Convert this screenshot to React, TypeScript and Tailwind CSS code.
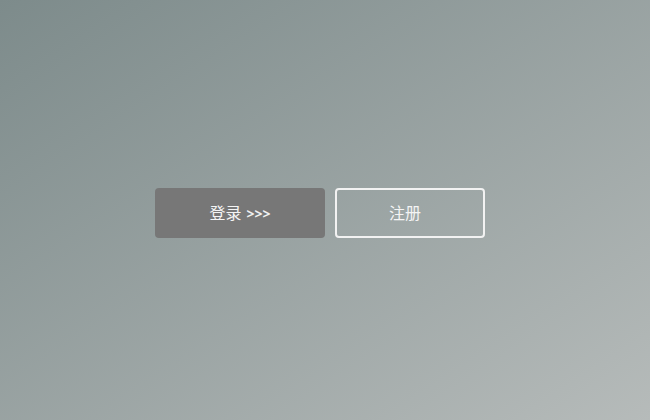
export default function App() {
  return (
    <div
      className="w-full h-screen flex items-center justify-center pr-[10px] pt-[6px] bg-gradient-to-br from-[#7d8b8b] to-[#b6bbba]"
      style={{ fontFamily: '"Noto Sans", "Noto Sans CJK SC", sans-serif' }}
    >
      <div className="flex gap-[10px]">
        <button className="w-[170px] h-[50px] rounded-[4px] bg-[#777777] text-[#f4f4f4] text-[16px] flex items-center justify-center">
          登录 <span className="ml-[5px] font-bold text-[14px] text-[#f1f1f1]">&gt;&gt;&gt;</span>
        </button>
        <button className="w-[150px] h-[50px] rounded-[4px] border-2 border-[#f2f2f2] text-[#f4f4f4] text-[16px] flex items-center justify-center pr-[10px]">
          注册
        </button>
      </div>
    </div>
  );
}
